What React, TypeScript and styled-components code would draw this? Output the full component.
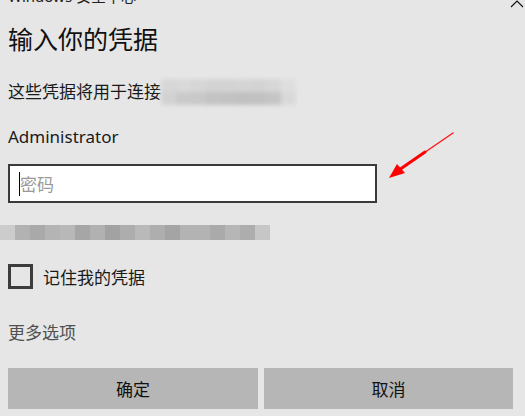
import React from 'react';
import styled, { createGlobalStyle } from 'styled-components';

const GlobalStyle = createGlobalStyle`
  html, body {
    margin: 0;
    padding: 0;
    background: #e6e6e6;
    overflow: hidden;
  }
  body {
    font-family: "Segoe UI", "Noto Sans", "Noto Sans CJK SC", sans-serif;
    color: #1a1a1a;
  }
`;

const Dialog = styled.div`
  position: relative;
  width: 525px;
  height: 416px;
  box-sizing: border-box;
  padding: 0 12px 0 8px;
  background: #e6e6e6;
  overflow: hidden;
  display: flex;
  flex-direction: column;
`;

const TopBar = styled.div`
  display: flex;
  justify-content: space-between;
  align-items: flex-start;
  height: 20px;
  margin-top: -14px;
  margin-right: -12px;
`;

const AppName = styled.div`
  font-size: 15px;
  line-height: 20px;
  color: #222;
`;

const Collapse = styled.svg`
  width: 14px;
  height: 8px;
  margin-top: 14px;
  margin-right: 1px;
`;

const Title = styled.h1`
  margin: 16px 0 0;
  font-size: 25px;
  font-weight: 400;
  line-height: 34px;
  color: #111;
`;

const Line = styled.div<{ $top: number; $muted?: boolean }>`
  margin-top: ${p => p.$top}px;
  font-size: 17px;
  line-height: 24px;
  color: ${p => (p.$muted ? '#505050' : '#1a1a1a')};
  display: flex;
  align-items: center;
`;

const Mosaic = styled.div`
  display: grid;
  grid-template-columns: repeat(9, 15px);
  grid-template-rows: 13px 13px;
  filter: blur(2px);
  opacity: 0.9;
`;

const Cell = styled.div<{ $shade: string }>`
  background: ${p => p.$shade};
`;

const PasswordBox = styled.div`
  margin-top: 15px;
  width: 369px;
  height: 39px;
  box-sizing: border-box;
  border: 2px solid #3a3a3a;
  background: #fff;
  display: flex;
  align-items: center;
  padding-left: 9px;
`;

const Caret = styled.div`
  width: 1px;
  height: 24px;
  background: #000;
`;

const Placeholder = styled.span`
  font-size: 17px;
  color: #9a9a9a;
`;

const PixelStrip = styled.div`
  display: flex;
  margin: 22px 0 0 -8px;
  height: 15px;
`;

const PixelBlock = styled.div<{ $shade: string }>`
  width: 15px;
  height: 15px;
  background: ${p => p.$shade};
`;

const CheckRow = styled.label`
  margin-top: 24px;
  display: flex;
  align-items: center;
  gap: 10px;
  font-size: 17px;
  color: #1a1a1a;
`;

const CheckBox = styled.span`
  width: 25px;
  height: 25px;
  box-sizing: border-box;
  border: 3px solid #3c3c3c;
  background: #e6e6e6;
`;

const Buttons = styled.div`
  margin-top: 23px;
  display: grid;
  grid-template-columns: 250px 249px;
  gap: 6px;
`;

const Button = styled.button`
  height: 41px;
  border: none;
  background: #b6b6b6;
  font-family: inherit;
  font-size: 17px;
  color: #111;
  padding: 0;
`;

const Arrow = styled.svg`
  position: absolute;
  left: 385px;
  top: 130px;
  width: 72px;
  height: 52px;
`;

const topShades = ['#d6d6d6', '#d8d8d8', '#d5d5d5', '#d2d2d2', '#d2d2d2', '#d3d3d3', '#d2d2d2', '#d6d6d6', '#dedede'];
const bottomShades = ['#d0d0d0', '#c8c8c8', '#c6c6c6', '#c0c0c0', '#bfbfbf', '#bdbdbd', '#bebebe', '#c2c2c2', '#d8d8d8'];
const stripShades = [
  '#cccccc', '#b2b2b2', '#a9a9a9', '#b4b4b4', '#b8b8b8', '#a6a6a6', '#b1b1b1', '#a2a2a2', '#adadad',
  '#b9b9b9', '#aeaeae', '#a4a4a4', '#b3b3b3', '#b3b3b3', '#aaaaaa', '#b6b6b6', '#adadad', '#c6c6c6',
];

export default function App() {
  return (
    <>
      <GlobalStyle />
      <Dialog>
        <TopBar>
          <AppName>Windows 安全中心</AppName>
          <Collapse viewBox="0 0 14 8">
            <path d="M1 7 L7 1 L13 7" fill="none" stroke="#111" strokeWidth="1.2" />
          </Collapse>
        </TopBar>
        <Title>输入你的凭据</Title>
        <Line $top={23}>
          这些凭据将用于连接
          <Mosaic>
            {topShades.map((s, i) => <Cell key={'t' + i} $shade={s} />)}
            {bottomShades.map((s, i) => <Cell key={'b' + i} $shade={s} />)}
          </Mosaic>
        </Line>
        <Line $top={20}>Administrator</Line>
        <PasswordBox>
          <Caret />
          <Placeholder>密码</Placeholder>
        </PasswordBox>
        <PixelStrip>
          {stripShades.map((s, i) => <PixelBlock key={i} $shade={s} />)}
        </PixelStrip>
        <CheckRow>
          <CheckBox />
          记住我的凭据
        </CheckRow>
        <Line $top={32} $muted>更多选项</Line>
        <Buttons>
          <Button>确定</Button>
          <Button>取消</Button>
        </Buttons>
        <Arrow viewBox="0 0 72 52">
          <path d="M68 3 L14 40" stroke="#ff1a1a" strokeWidth="1.5" strokeLinecap="round" />
          <path d="M40 22 L14 40" stroke="#ff0000" strokeWidth="3" strokeLinecap="round" />
          <polygon points="4,48 12,34 20,43" fill="#ff0000" />
        </Arrow>
      </Dialog>
    </>
  );
}
